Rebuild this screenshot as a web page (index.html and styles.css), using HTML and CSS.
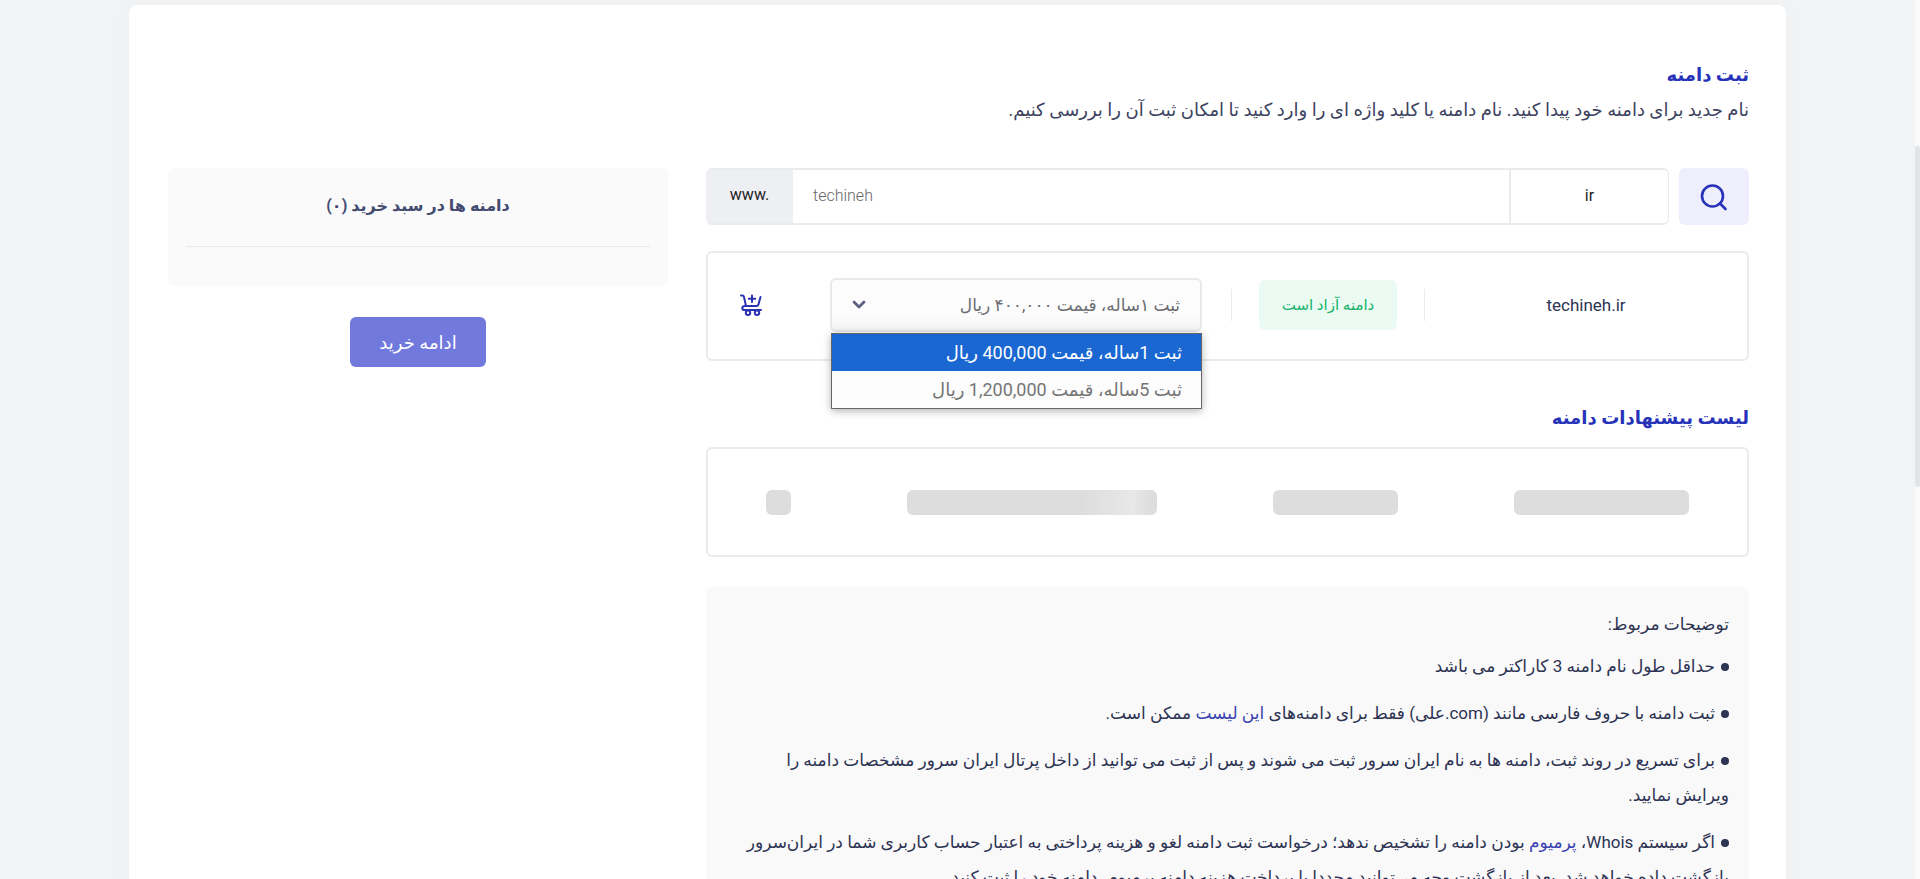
FILE: index.html
```html
<!DOCTYPE html>
<html lang="fa" dir="rtl">
  <head>
    <meta charset="UTF-8" />
    <meta name="viewport" content="width=device-width, initial-scale=1.0" />
    <title>ثبت دامنه</title>
    <link rel="stylesheet" href="styles.css">
  </head>
  <body>
    <div class="page">
      <header class="page-header">
        <h1 class="section-title">ثبت دامنه</h1>
        <p class="intro">نام جدید برای دامنه خود پیدا کنید. نام دامنه یا کلید واژه ای را وارد کنید تا امکان ثبت آن را بررسی کنیم.</p>
      </header>

      <div class="columns">
        <main class="main-col">
          <form class="search-form">
            <button type="submit" class="search-btn" aria-label="جستجو">
              <svg width="28" height="28" viewBox="0 0 28 28" fill="none" stroke="currentColor" stroke-width="2.6" stroke-linecap="round">
                <circle cx="12.5" cy="13" r="10.5" />
                <path d="M20 20.500 25.500 26" />
              </svg>
            </button>
            <div class="search-fields">
              <input type="text" class="tld-input" value="ir" aria-label="پسوند" dir="ltr" />
              <input type="text" class="name-input" value="techineh" aria-label="نام دامنه" dir="ltr" />
              <span class="prefix" dir="ltr">www.</span>
            </div>
          </form>

          <div class="result-card">
            <div class="result-name" dir="ltr">techineh.ir</div>
            <div class="result-status"><span class="badge">دامنه آزاد است</span></div>
            <div class="result-period">
              <div class="select-wrap">
                <select class="period-select" aria-label="مدت ثبت">
                  <option>ثبت ۱ساله، قیمت ۴۰۰,۰۰۰ ریال</option>
                  <option>ثبت ۵ساله، قیمت ۱,۲۰۰,۰۰۰ ریال</option>
                </select>
                <svg class="chevron" width="14" height="10" viewBox="0 0 14 10" fill="none" stroke="currentColor" stroke-width="2.8" stroke-linecap="round" stroke-linejoin="round">
                  <path d="M2 2l5 5 5-5" />
                </svg>
                <ul class="options" role="listbox">
                  <li class="option active" role="option" aria-selected="true">ثبت 1ساله، قیمت 400,000 ریال</li>
                  <li class="option" role="option" aria-selected="false">ثبت 5ساله، قیمت 1,200,000 ریال</li>
                </ul>
              </div>
            </div>
            <button type="button" class="cart-btn" aria-label="افزودن به سبد خرید">
              <svg width="22" height="22" viewBox="0 0 22 22" fill="none" stroke="currentColor" stroke-width="2" stroke-linecap="round" stroke-linejoin="round">
                <path d="M1 1.500h1.500c.8 0 1.200.4 1.400 1.100L6 12h10.500c1 0 1.600-.5 1.900-1.300L20.500 3" />
                <path d="M6 12H4.500C1.500 12.500 1.500 16 4.500 16H21" />
                <path d="M12 1.500v6.500M8.800 4.800h6.400" />
                <circle cx="8" cy="18.800" r="2.200" />
                <circle cx="17" cy="18.800" r="2.200" />
              </svg>
            </button>
          </div>

          <h2 class="section-title suggestions-title">لیست پیشنهادات دامنه</h2>
          <div class="skeleton-card">
            <span class="skeleton skeleton-md"></span>
            <span class="skeleton skeleton-sm"></span>
            <span class="skeleton skeleton-lg"></span>
            <span class="skeleton skeleton-xs"></span>
          </div>

          <section class="notes">
            <p class="notes-title">توضیحات مربوط:</p>
            <ul class="notes-list">
              <li>حداقل طول نام دامنه 3 کاراکتر می باشد</li>
              <li>ثبت دامنه با حروف فارسی مانند (com.علی) فقط برای دامنه‌های <a href="#">این لیست</a> ممکن است.</li>
              <li>برای تسریع در روند ثبت، دامنه ها به نام ایران سرور ثبت می شوند و پس از ثبت می توانید از داخل پرتال ایران سرور مشخصات دامنه را<br>ویرایش نمایید.</li>
              <li>اگر سیستم Whois، <a href="#">پرمیوم</a> بودن دامنه را تشخیص ندهد؛ درخواست ثبت دامنه لغو و هزینه پرداختی به اعتبار حساب کاربری شما در ایران‌سرور بازگشت داده خواهد شد. بعد از بازگشت وجه می‌توانید مجددا با پرداخت هزینه دامنه پرمیوم، دامنه خود را ثبت کنید.</li>
            </ul>
          </section>
        </main>

        <aside class="cart-col">
          <div class="cart-box">
            <h2 class="cart-title">دامنه ها در سبد خرید (۰)</h2>
          </div>
          <button type="button" class="continue-btn">ادامه خرید</button>
        </aside>
      </div>
    </div>
    <div class="scrollbar"><div class="scrollbar-thumb"></div></div>
  </body>
</html>
```

FILE: styles.css
```css
* {
  margin: 0;
  padding: 0;
  box-sizing: border-box;
}

body {
  font-family: Roboto, "DejaVu Sans", sans-serif;
  font-size: 17px;
  line-height: 35px;
  background-color: #f1f3f5;
  color: #2d3352;
  height: 100vh;
  overflow: hidden;
}

button,
input,
select {
  font: inherit;
  color: inherit;
  border: none;
}

a {
  color: #3a43b0;
  text-decoration: none;
}

ul {
  list-style: none;
}

.page {
  margin: 5px 134px 0 129px;
  padding: 52px 37px 40px 39px;
  background-color: #fff;
  border-radius: 8px;
  box-shadow: 0 0 30px rgba(0, 0, 0, 0.02);
}

.section-title {
  color: #2632b8;
  font-size: 18px;
  font-weight: bold;
}

.intro {
  color: #3c4260;
  font-size: 18px;
}

.columns {
  display: flex;
  gap: 38px;
  margin-top: 41px;
  align-items: flex-start;
}

.main-col {
  flex: 1;
}

.cart-col {
  width: 500px;
  text-align: center;
}

/* search */
.search-form {
  display: flex;
  gap: 10px;
  height: 57px;
}

.search-btn {
  width: 70px;
  display: flex;
  align-items: center;
  justify-content: center;
  background-color: #eeeefc;
  color: #2632b8;
  border-radius: 6px;
  cursor: pointer;
}

.search-fields {
  flex: 1;
  display: flex;
  border: 2px solid #eaebec;
  border-width: 2px 1px 2px 0;
  border-radius: 6px;
  overflow: hidden;
  font-size: 16px;
}

.tld-input {
  width: 159px;
  padding-bottom: 2px;
  text-align: center;
  color: #222;
  border-left: 2px solid #eaebec;
}

.name-input {
  flex: 1;
  padding: 0 20px 2px;
  color: #666;
  font-weight: 300;
}

.prefix {
  width: 87px;
  margin: -2px 0;
  background-color: #edeff2;
  color: #222;
  line-height: 54px;
  text-align: center;
}

/* result */
.result-card,
.skeleton-card {
  display: flex;
  align-items: center;
  height: 110px;
  border: 2px solid #eaebec;
  border-radius: 6px;
}

.result-card {
  margin-top: 26px;
  padding-bottom: 2px;
}

.result-name {
  flex: 1;
  text-align: center;
}

.result-status {
  display: flex;
  align-items: center;
  justify-content: center;
  width: 194px;
  height: 32px;
  border: 1px solid #ebecee;
  border-width: 0 1px;
}

.badge {
  padding: 0 23px;
  background-color: #ebfbf3;
  color: #20b26b;
  font-size: 15px;
  line-height: 50px;
  border-radius: 6px;
}

.result-period {
  width: 438px;
  padding: 0 29px 0 37px;
}

.select-wrap {
  position: relative;
}

.period-select {
  display: block;
  width: 100%;
  height: 54px;
  padding: 0 20px;
  appearance: none;
  background: linear-gradient(#fcfcfd 70%, #f3f3f5);
  color: #6d6d72;
  border: 2px solid #e8e9eb;
  border-radius: 6px;
}

.chevron {
  position: absolute;
  left: 22px;
  top: 22px;
  color: #5c6080;
}

.options {
  position: absolute;
  z-index: 2;
  top: 55px;
  left: 1px;
  right: 0;
  background-color: #fcfcfc;
  border: 1px solid #666;
  box-shadow: 0 2px 8px rgba(0, 0, 0, 0.3);
}

.option {
  padding: 0 19px;
  color: #757575;
  font-size: 18px;
  line-height: 37px;
}

.option.active {
  background-color: #1a67d2;
  color: #fff;
}

.cart-btn {
  width: 85px;
  display: flex;
  justify-content: center;
  background: none;
  color: #2b33b4;
  cursor: pointer;
}

/* suggestions */
.suggestions-title {
  margin: 39px 0 12px;
}

.skeleton-card {
  justify-content: space-around;
}

.skeleton {
  height: 25px;
  border-radius: 6px;
  background-color: #ddd;
}

.skeleton-xs {
  width: 25px;
}

.skeleton-sm {
  width: 125px;
}

.skeleton-md {
  width: 175px;
}

.skeleton-lg {
  width: 250px;
  background-image: linear-gradient(to right, #ddd 70%, #e8e8e8 90%, #ddd 98%);
}

/* notes */
.notes {
  margin-top: 30px;
  padding: 20px;
  background-color: #f9f9fa;
  border-radius: 6px;
}

.notes-title {
  margin-bottom: 7px;
}

.notes-list li {
  margin-bottom: 12px;
}

.notes-list li::before {
  content: "";
  display: inline-block;
  width: 8px;
  height: 8px;
  margin-left: 6px;
  border-radius: 50%;
  background-color: #2d3352;
  vertical-align: 1px;
}

/* cart */
.cart-box {
  height: 118px;
  padding: 20px 18px 0;
  background-color: #fafafb;
  border-radius: 6px;
}

.cart-title {
  padding-bottom: 23px;
  color: #434c70;
  font-size: 16px;
  font-weight: bold;
  border-bottom: 1px solid #e8e9eb;
}

.continue-btn {
  margin-top: 31px;
  padding: 0 29px;
  height: 50px;
  background-color: #7179dd;
  color: #fff;
  font-size: 18px;
  border-radius: 6px;
  cursor: pointer;
}

.scrollbar {
  position: fixed;
  top: 0;
  right: 0;
  bottom: 0;
  width: 5px;
  padding-top: 146px;
  background-color: #fafafb;
}

.scrollbar-thumb {
  height: 341px;
  background-color: #e3e4e6;
  border-radius: 2px;
}
```
